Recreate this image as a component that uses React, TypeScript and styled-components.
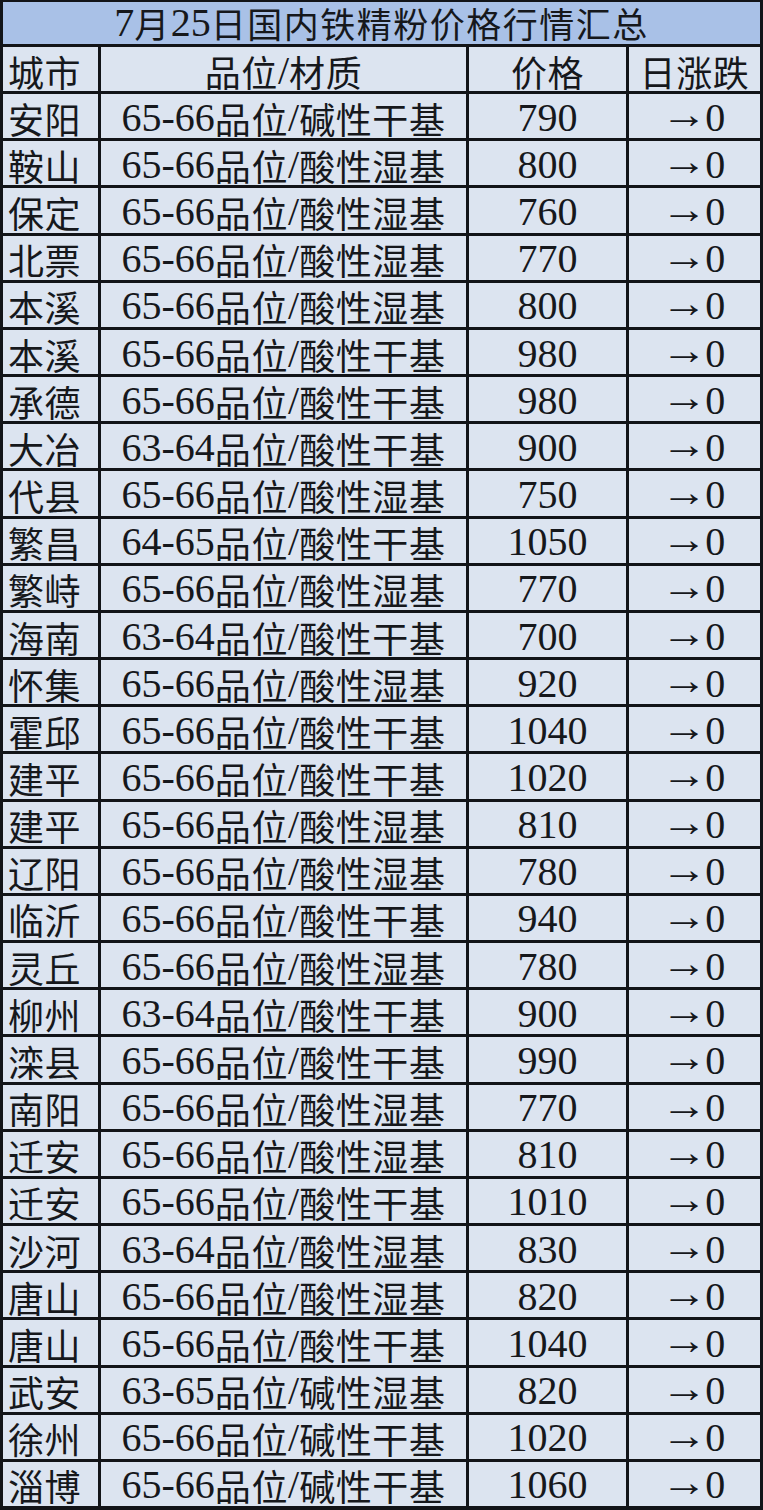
import React from "react"
import styled, { createGlobalStyle } from "styled-components"

const GlobalStyle = createGlobalStyle`
  html, body {
    margin: 0;
    padding: 0;
    background: #dce4f0;
  }
`

const rows: [string, string, string][] = [
  ["安阳", "65-66品位/碱性干基", "790"],
  ["鞍山", "65-66品位/酸性湿基", "800"],
  ["保定", "65-66品位/酸性湿基", "760"],
  ["北票", "65-66品位/酸性湿基", "770"],
  ["本溪", "65-66品位/酸性湿基", "800"],
  ["本溪", "65-66品位/酸性干基", "980"],
  ["承德", "65-66品位/酸性干基", "980"],
  ["大冶", "63-64品位/酸性干基", "900"],
  ["代县", "65-66品位/酸性湿基", "750"],
  ["繁昌", "64-65品位/酸性干基", "1050"],
  ["繁峙", "65-66品位/酸性湿基", "770"],
  ["海南", "63-64品位/酸性干基", "700"],
  ["怀集", "65-66品位/酸性湿基", "920"],
  ["霍邱", "65-66品位/酸性干基", "1040"],
  ["建平", "65-66品位/酸性干基", "1020"],
  ["建平", "65-66品位/酸性湿基", "810"],
  ["辽阳", "65-66品位/酸性湿基", "780"],
  ["临沂", "65-66品位/酸性干基", "940"],
  ["灵丘", "65-66品位/酸性湿基", "780"],
  ["柳州", "63-64品位/酸性干基", "900"],
  ["滦县", "65-66品位/酸性干基", "990"],
  ["南阳", "65-66品位/酸性湿基", "770"],
  ["迁安", "65-66品位/酸性湿基", "810"],
  ["迁安", "65-66品位/酸性干基", "1010"],
  ["沙河", "63-64品位/酸性湿基", "830"],
  ["唐山", "65-66品位/酸性湿基", "820"],
  ["唐山", "65-66品位/酸性干基", "1040"],
  ["武安", "63-65品位/碱性湿基", "820"],
  ["徐州", "65-66品位/碱性干基", "1020"],
  ["淄博", "65-66品位/碱性干基", "1060"],
]

const Sheet = styled.div`
  box-sizing: border-box;
  width: 763px;
  height: 1510px;
  padding: 2px 3px 4px 3px;
  background: #121418;
  display: grid;
  grid-template-columns: 95px 365px 157px 1fr;
  grid-template-rows: 42px repeat(31, minmax(0, 1fr));
  gap: 3px;
  font-family: "Noto Sans CJK SC", "Noto Sans CJK JP", serif;
  color: #16181c;
`

const Title = styled.div`
  grid-column: 1 / -1;
  background: #a9c1e7;
  display: flex;
  align-items: center;
  justify-content: center;
  font-size: 35px;
  line-height: 38px;
  letter-spacing: 1.5px;
`

const Cell = styled.div<{ $align?: "left" | "center" }>`
  background: #dce4f0;
  display: flex;
  align-items: center;
  justify-content: ${(p) => (p.$align === "left" ? "flex-start" : "center")};
  padding: 3px ${(p) => (p.$align === "left" ? "5px" : "0")} 0;
  font-size: 36px;
  line-height: 38px;
  letter-spacing: 0.6px;
  white-space: nowrap;
`

const Latin = styled.span`
  font-family: "Liberation Serif", "Times New Roman", serif;
  font-size: 40px;
  line-height: 38px;
  letter-spacing: 0;
`

const Arrow = styled.span`
  font-family: "Liberation Serif", "Times New Roman", serif;
  font-size: 40px;
  line-height: 30px;
  margin: 0 1px 5px 0;
  transform: scaleX(1.15);
`

// digits, dashes and slashes are drawn in the serif latin face
const Mixed = ({ text }: { text: string }) => (
  <>
    {text.split(/([0-9\-/]+)/).map((part, i) =>
      /^[0-9\-/]+$/.test(part) ? <Latin key={i}>{part}</Latin> : part
    )}
  </>
)

export default function App() {
  return (
    <>
      <GlobalStyle />
      <Sheet>
        <Title>
          <Mixed text="7月25日国内铁精粉价格行情汇总" />
        </Title>

        <Cell $align="left">城市</Cell>
        <Cell>
          <Mixed text="品位/材质" />
        </Cell>
        <Cell>价格</Cell>
        <Cell>日涨跌</Cell>

        {rows.map(([city, grade, price], i) => (
          <React.Fragment key={i}>
            <Cell $align="left">{city}</Cell>
            <Cell>
              <Mixed text={grade} />
            </Cell>
            <Cell>
              <Mixed text={price} />
            </Cell>
            <Cell>
              <Arrow>→</Arrow>
              <Latin>0</Latin>
            </Cell>
          </React.Fragment>
        ))}
      </Sheet>
    </>
  )
}
